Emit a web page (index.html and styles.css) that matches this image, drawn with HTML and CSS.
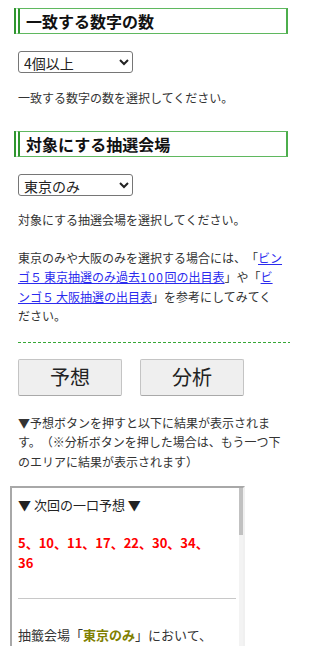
FILE: index.html
```html
<!DOCTYPE html>
<html lang="ja">
<head>
<meta charset="utf-8">
<title>ビンゴ5 予想</title>
<link rel="stylesheet" href="styles.css">
</head>
<body>
<main class="page">
  <h2 class="ttl">一致する数字の数</h2>
  <div class="field">
    <select class="sel">
      <option>4個以上</option>
      <option>5個以上</option>
    </select>
  </div>
  <p class="note note-1">一致する数字の数を選択してください。</p>

  <h2 class="ttl ttl-2">対象にする抽選会場</h2>
  <div class="field">
    <select class="sel">
      <option>東京のみ</option>
      <option>大阪のみ</option>
    </select>
  </div>
  <p class="note note-2">対象にする抽選会場を選択してください。</p>

  <p class="note note-3">東京のみや大阪のみを選択する場合には、「<a href="#">ビンゴ<span class="fw">５</span>東京抽選のみ過去<span class="num">100</span>回の出目表</a>」や「<a href="#">ビンゴ<span class="fw">５</span>大阪抽選の出目表</a>」を参考にしてみてください。</p>

  <div class="divider"></div>

  <div class="buttons">
    <button class="btn" type="button">予想</button>
    <button class="btn" type="button">分析</button>
  </div>

  <p class="note note-4">▼予想ボタンを押すと以下に結果が表示されます。（※分析ボタンを押した場合は、もう一つ下のエリアに結果が表示されます）</p>

  <div class="result">
    <div class="result-inner">
      <p class="r-title">▼ 次回の一口予想 ▼</p>
      <p class="r-nums">5、10、11、17、22、30、34、36</p>
      <hr class="r-hr">
      <p class="r-text">抽籤会場「<strong class="venue">東京のみ</strong>」において、<br>一致する数字が4個以上の過去の抽選結果をもとに予想しています。</p>
    </div>
  </div>
</main>
</body>
</html>
```

FILE: styles.css
```css
html, body {
  margin: 0;
  padding: 0;
  background: #fff;
}

body {
  font-family: "Noto Sans CJK JP", "Noto Sans", sans-serif;
  color: #333;
  width: 300px;
  height: 646px;
  overflow: hidden;
  text-spacing-trim: space-all;
}

.page {
  padding: 8px 10px 0 10px;
}

.ttl {
  margin: 0 2px 0 4px;
  height: 26px;
  box-sizing: border-box;
  border-top: 1px solid #5fb85f;
  border-bottom: 1px solid #5fb85f;
  border-right: 2px solid #4cae4c;
  border-left: 6px double #2f962f;
  padding: 0 0 0 6px;
  font-size: 16px;
  font-weight: bold;
  line-height: 24px;
  color: #111;
}

.ttl-2 {
  margin-top: 23.5px;
}

.field {
  margin: 16px 0 0 8px;
  height: 22px;
}

.sel {
  width: 115px;
  height: 22px;
  font-family: "Noto Sans CJK JP", sans-serif;
  font-size: 14px;
  color: #222;
  background: #fff;
  border: 1px solid #767676;
  border-radius: 3px;
  padding: 0 0 0 1px;
  margin: 0;
  box-sizing: border-box;
}

.note {
  margin: 15.5px 0 0 8px;
  max-width: 265px;
  font-size: 12px;
  line-height: 19.5px;
  color: #333;
}

.note-3 {
  margin-top: 18px;
}

.note a {
  color: #2b2bee;
  text-decoration: underline;
}

.num {
  letter-spacing: 1.5px;
}

.fw {
  letter-spacing: 2px;
}

.divider {
  margin: 16px 0 0 8px;
  height: 1px;
  background: repeating-linear-gradient(to right, #36a836 0, #36a836 3px, transparent 3px, transparent 5px);
}

.buttons {
  display: flex;
  gap: 18px;
  margin: 16px 0 0 8px;
}

.btn {
  width: 104px;
  height: 37px;
  box-sizing: border-box;
  margin: 0;
  padding: 0;
  font-family: "Noto Sans CJK JP", sans-serif;
  font-size: 20px;
  line-height: 1;
  color: #222;
  background: #efefef;
  border: 1px solid #c4c4c4;
  border-bottom-color: #a9a9a9;
  border-radius: 2px;
}

.note-4 {
  margin-top: 17px;
}

.result {
  position: relative;
  margin: 15px 0 0 0;
  width: 235px;
  height: 162px;
  box-sizing: border-box;
  border-top: 2px solid #a8a8a8;
  border-left: 2px solid #a8a8a8;
  border-right: 2px solid #f0f0f0;
  border-bottom: 2px solid #f0f0f0;
  overflow: hidden;
}

/* scrollbar track */
.result::before {
  content: "";
  position: absolute;
  top: 0;
  right: 0;
  bottom: 0;
  width: 4px;
  background: #f3f3f3;
}

/* scrollbar thumb */
.result::after {
  content: "";
  position: absolute;
  top: -2px;
  right: 0;
  width: 4px;
  height: 49px;
  background: #c1c1c1;
}

.result-inner {
  padding: 7px 7px 0 6px;
}

.r-title {
  margin: 0;
  font-size: 13px;
  line-height: 19.5px;
  color: #222;
}

.r-nums {
  margin: 18px 0 0 0;
  max-width: 200px;
  font-size: 13px;
  font-weight: bold;
  line-height: 20px;
  color: #ff0000;
}

.r-hr {
  margin: 25px 0 0 0;
  border: 0;
  border-top: 1px solid #c8c8c8;
  height: 0;
}

.r-text {
  margin: 26px 0 0 0;
  font-size: 13px;
  line-height: 20px;
  color: #333;
}

.venue {
  color: #808000;
  font-weight: bold;
}
```
